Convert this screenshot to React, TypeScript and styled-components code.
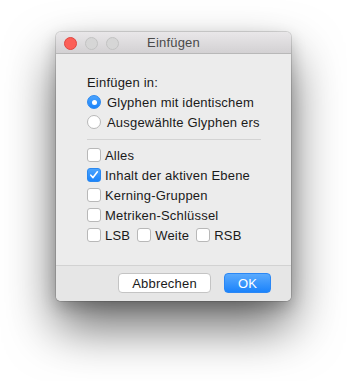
import styled, { createGlobalStyle } from 'styled-components';

const GlobalStyle = createGlobalStyle`
  body {
    margin: 0;
    background: #ffffff;
    font-family: "Liberation Sans", Arial, sans-serif;
  }
`;

export default function App() {
  return (
    <Page>
      <GlobalStyle />
      <Window>
        <TitleBar>
          <Lights>
            <Light color="#fc5f57" edge="#df4640" />
            <Light color="#d6d6d6" edge="#c2c2c2" />
            <Light color="#d6d6d6" edge="#c2c2c2" />
          </Lights>
          <Title>Einfügen</Title>
        </TitleBar>
        <Body>
          <Label>Einfügen in:</Label>
          <Row>
            <Radio checked />
            <RadioText>Glyphen mit identischem</RadioText>
          </Row>
          <Row>
            <Radio />
            <RadioText>Ausgewählte Glyphen ers</RadioText>
          </Row>
          <Divider />
          <Row>
            <Check />
            <CheckText>Alles</CheckText>
          </Row>
          <Row>
            <Check checked>
              <svg width="10" height="10" viewBox="0 0 10 10">
                <path d="M1.8 5.2 L4 7.6 L8.4 1.8" fill="none" stroke="#fff" strokeWidth="1.6" strokeLinecap="round" strokeLinejoin="round" />
              </svg>
            </Check>
            <CheckText>Inhalt der aktiven Ebene</CheckText>
          </Row>
          <Row>
            <Check />
            <CheckText>Kerning-Gruppen</CheckText>
          </Row>
          <Row>
            <Check />
            <CheckText>Metriken-Schlüssel</CheckText>
          </Row>
          <Row spaced>
            <Item>
              <Check />
              <CheckText>LSB</CheckText>
            </Item>
            <Item>
              <Check />
              <CheckText>Weite</CheckText>
            </Item>
            <Item>
              <Check />
              <CheckText>RSB</CheckText>
            </Item>
          </Row>
        </Body>
        <Footer>
          <Button>Abbrechen</Button>
          <Button primary>OK</Button>
        </Footer>
      </Window>
    </Page>
  );
}

const Page = styled.div`
  padding: 32px 0 0 56px;
  height: 381px;
  box-sizing: border-box;
`;

const Window = styled.div`
  width: 235px;
  height: 269px;
  display: flex;
  flex-direction: column;
  background: #ececec;
  border-radius: 5px;
  overflow: hidden;
  box-shadow: 0 26px 50px rgba(0, 0, 0, 0.58), 0 6px 16px rgba(0, 0, 0, 0.2), 0 0 0 1px rgba(0, 0, 0, 0.13);
`;

const TitleBar = styled.div`
  position: relative;
  height: 21px;
  display: flex;
  align-items: center;
  justify-content: center;
  background: linear-gradient(#e9e7e9, #d3d1d3);
  border-bottom: 1px solid #b8b8b8;
`;

const Lights = styled.div`
  position: absolute;
  left: 8px;
  top: 5px;
  display: flex;
  gap: 8px;
`;

const Light = styled.span<{ color: string; edge: string }>`
  width: 11px;
  height: 11px;
  border-radius: 50%;
  background: ${(p) => p.color};
  border: 0.5px solid ${(p) => p.edge};
`;

const Title = styled.div`
  font-size: 13px;
  color: #4a4a4a;
  letter-spacing: 0.2px;
`;

const Body = styled.div`
  flex: 1;
  padding: 20px 30px 0 31px;
  font-size: 13px;
  letter-spacing: 0.2px;
  color: #1a1a1a;
`;

const Label = styled.div`
  height: 18px;
  line-height: 18px;
`;

const Row = styled.div<{ spaced?: boolean }>`
  height: 20px;
  display: flex;
  align-items: center;
  gap: ${(p) => (p.spaced ? '7px' : '0')};
`;

const Item = styled.div`
  display: flex;
  align-items: center;
`;

const Radio = styled.span<{ checked?: boolean }>`
  box-sizing: border-box;
  width: 14px;
  height: 14px;
  border-radius: 50%;
  flex: none;
  display: flex;
  align-items: center;
  justify-content: center;
  background: ${(p) => (p.checked ? 'linear-gradient(#4aa3fd, #1b84fb)' : '#fff')};
  border: 1px solid ${(p) => (p.checked ? '#2a88f0' : '#b8b8b8')};
  &::after {
    content: '';
    width: 5px;
    height: 5px;
    border-radius: 50%;
    background: #fff;
    display: ${(p) => (p.checked ? 'block' : 'none')};
  }
`;

const RadioText = styled.span`
  margin-left: 6px;
  white-space: nowrap;
`;

const Check = styled.span<{ checked?: boolean }>`
  box-sizing: border-box;
  width: 14px;
  height: 14px;
  border-radius: 3px;
  flex: none;
  display: flex;
  align-items: center;
  justify-content: center;
  background: ${(p) => (p.checked ? 'linear-gradient(#4aa3fd, #1b84fb)' : '#fff')};
  border: 1px solid ${(p) => (p.checked ? '#2a88f0' : '#b8b8b8')};
`;

const CheckText = styled.span`
  margin-left: 4px;
  white-space: nowrap;
`;

const Divider = styled.div`
  height: 1px;
  background: #d3d3d3;
  margin: 7px 0 5px;
`;

const Footer = styled.div`
  height: 36px;
  display: flex;
  justify-content: flex-end;
  align-items: flex-start;
  gap: 13px;
  padding: 7px 20px 0 0;
  box-sizing: border-box;
  background: #e6e6e6;
  border-top: 1px solid #d2d2d2;
`;

const Button = styled.button<{ primary?: boolean }>`
  box-sizing: border-box;
  height: 20px;
  width: ${(p) => (p.primary ? '47px' : '93px')};
  padding: 0;
  border-radius: 4px;
  font-family: inherit;
  font-size: 13px;
  letter-spacing: 0.2px;
  color: ${(p) => (p.primary ? '#fff' : '#1a1a1a')};
  background: ${(p) => (p.primary ? 'linear-gradient(#5aaafd, #1b83fb)' : '#fff')};
  border: 1px solid ${(p) => (p.primary ? '#2a87f5' : '#c4c4c4')};
`;
